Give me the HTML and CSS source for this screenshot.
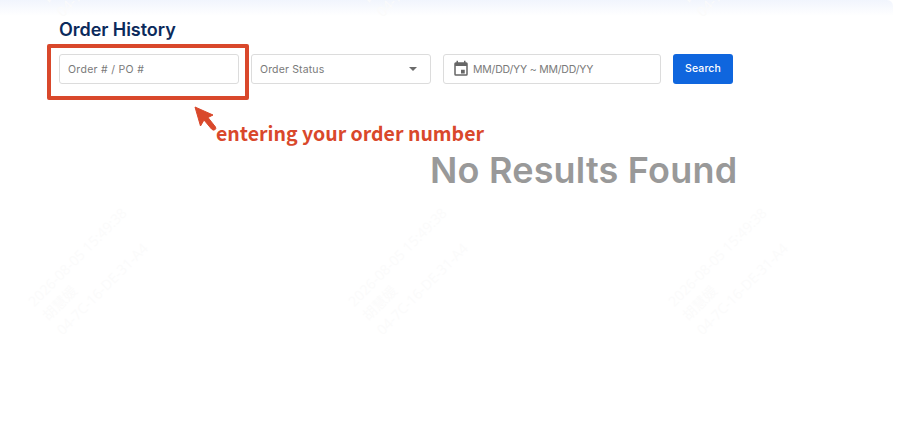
FILE: index.html
```html
<!DOCTYPE html>
<html lang="en">
<head>
<meta charset="utf-8">
<title>Order History</title>
<link rel="stylesheet" href="styles.css">
</head>
<body>
<div class="page">
  <div class="topband"></div>
  <div class="marks" aria-hidden="true">
    <div class="mark"><span>2026-08-05 15:49:38</span><span>胡慧媛</span><span>04-7C-16-DE-31-A4</span></div>
    <div class="mark"><span>2026-08-05 15:49:38</span><span>胡慧媛</span><span>04-7C-16-DE-31-A4</span></div>
    <div class="mark"><span>2026-08-05 15:49:38</span><span>胡慧媛</span><span>04-7C-16-DE-31-A4</span></div>
    <div class="mark"><span>2026-08-05 15:49:38</span><span>胡慧媛</span><span>04-7C-16-DE-31-A4</span></div>
    <div class="mark"><span>2026-08-05 15:49:38</span><span>胡慧媛</span><span>04-7C-16-DE-31-A4</span></div>
    <div class="mark"><span>2026-08-05 15:49:38</span><span>胡慧媛</span><span>04-7C-16-DE-31-A4</span></div>
  </div>
  <h1 class="title">Order History</h1>
  <form class="filters">
    <div class="field field-order">Order # / PO #</div>
    <div class="field field-status">
      <span>Order Status</span>
      <svg class="caret" width="8" height="4" viewBox="0 0 10 5"><path d="M0 0h10L5 5z" fill="#6b6b6b"/></svg>
    </div>
    <div class="field field-date">
      <svg class="cal" width="18" height="18" viewBox="0 0 24 24"><path fill="#666" d="M19 3h-1V1h-2v2H8V1H6v2H5a2 2 0 0 0-2 2v14a2 2 0 0 0 2 2h14a2 2 0 0 0 2-2V5a2 2 0 0 0-2-2zm0 16H5V8h14v11zM7 13h5v5H7z" transform="translate(24 0) scale(-1 1)"/></svg>
      <span>MM/DD/YY ~ MM/DD/YY</span>
    </div>
    <button class="search" type="button">Search</button>
  </form>
  <p class="empty">No Results Found</p>

  <div class="highlight"></div>
  <svg class="arrow" width="24" height="26" viewBox="0 0 24 26"><path fill="#d9482b" stroke="#d9482b" stroke-linejoin="round" d="M1 1L19 9 14 11.500 21.500 21Q22.500 23 20.500 24 19 24.500 17.500 23L10 14 6.500 20z"/></svg>
  <div class="note">entering your order number</div>
</div>
</body>
</html>
```

FILE: styles.css
```css
* { box-sizing: border-box; }
html, body { margin: 0; height: 100%; background: #fff; overflow: hidden; }
body { font-family: "Inter", "Noto Sans", sans-serif; }

.page { position: relative; width: 897px; height: 429px; padding: 18px 0 0 59px; overflow: hidden; }
.topband {
  position: absolute; left: 0; top: 0; width: 893px; height: 16px;
  background: linear-gradient(#f1f5fd, #fff);
  border-radius: 0 6px 0 0;
}
.title { position: relative; margin: 0; height: 24px; font-size: 18px; line-height: 24px; font-weight: 600; color: #0b2a5b; letter-spacing: -0.05px; }

.filters { position: relative; display: flex; gap: 12px; margin-top: 12px; }
.field {
  height: 30px; display: flex; align-items: center;
  border: 1px solid #dcdcdc; border-radius: 3px; background: #fff;
  font-size: 10.500px; color: #7a7a7a; padding: 0 8px;
}
.field-order { width: 180px; letter-spacing: 0.3px; }
.field-status { width: 180px; justify-content: space-between; padding-right: 13px; letter-spacing: 0.15px; }
.field-date { width: 218px; gap: 3px; letter-spacing: -0.2px; }
.cal { flex: none; }
.search {
  width: 60px; height: 30px; border: 0; border-radius: 3px; padding: 0 0 1px;
  background: #0f66de; color: #fff; font: 500 10.500px "Inter", sans-serif; letter-spacing: 0.1px;
}
.empty {
  position: relative; margin: 64px 0 0 371px; width: 320px;
  font-size: 36px; line-height: 44px; font-weight: 600; color: #999; letter-spacing: 0.2px; white-space: nowrap;
}

.highlight { position: absolute; left: 47px; top: 44px; width: 202px; height: 56px; border: 4px solid #d9482b; border-radius: 2px; }
.arrow { position: absolute; left: 194px; top: 106px; }
.note {
  position: absolute; left: 216px; top: 118.500px;
  font: 700 19.500px/27px "Noto Sans CJK SC", "Noto Sans", sans-serif; color: #d9482b; white-space: nowrap;
}

.marks {
  position: absolute; left: 23px; top: -83px; display: grid;
  grid-template-columns: repeat(3, 320px); grid-auto-rows: 318px; pointer-events: none;
}
.mark {
  width: 150px; height: 60px;
  display: flex; flex-direction: column;
  transform: rotate(-45deg);
  font: 14px/20px "Open Sans", "Noto Sans CJK SC", sans-serif; color: #fbfbfb; white-space: nowrap;
}
```
